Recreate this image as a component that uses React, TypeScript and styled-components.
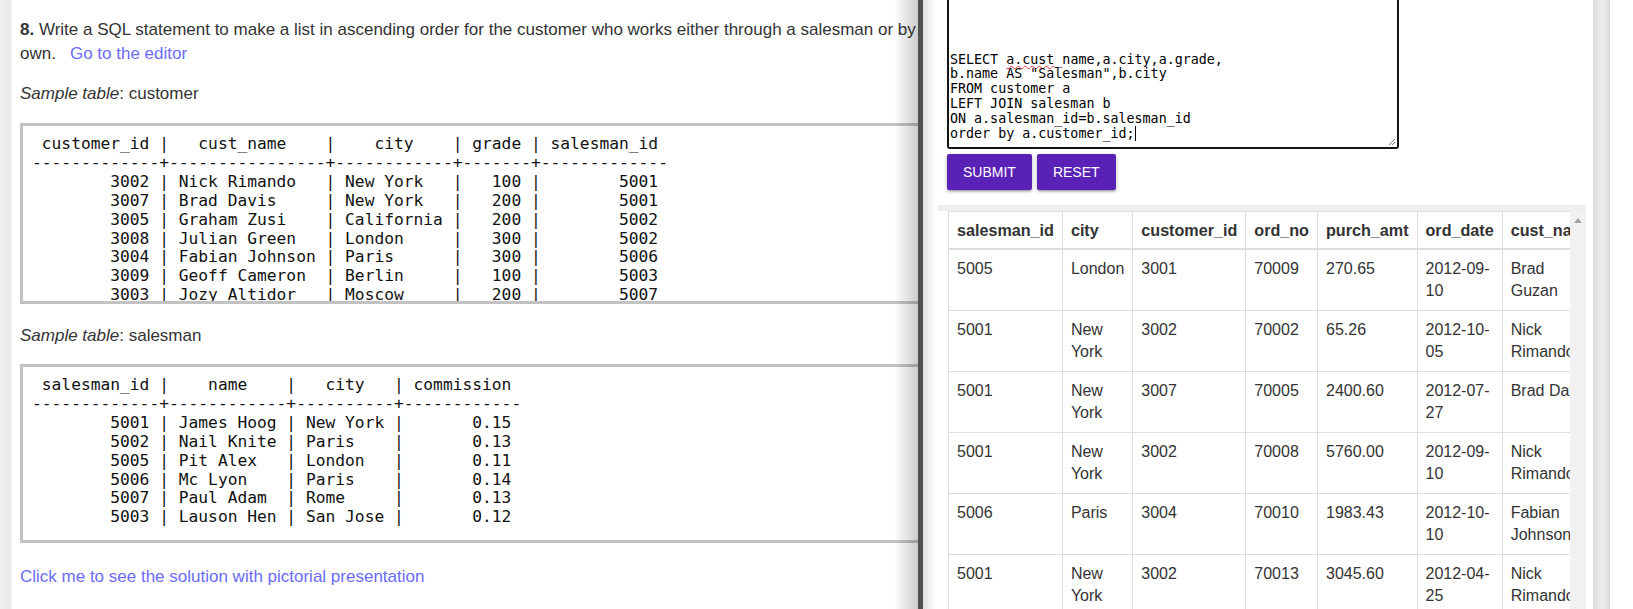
import React from 'react';
import styled, { createGlobalStyle } from 'styled-components';

const Global = createGlobalStyle`
  html, body { margin: 0; padding: 0; background: #fff; }
  body { overflow: hidden; }
`;

const Page = styled.div`
  display: flex;
  width: 1633px;
  height: 609px;
  overflow: hidden;
  background: #fff;
`;

const LeftPane = styled.div`
  position: relative;
  flex: 0 0 918px;
  min-width: 0;
  overflow: hidden;
  background: linear-gradient(to right, #f1f1f1 0, #e8e8e8 11px, #fff 12px);
  &::after {
    content: '';
    position: absolute;
    top: 0;
    right: 0;
    bottom: 0;
    width: 24px;
    background: linear-gradient(to right, rgba(0, 0, 0, 0), rgba(0, 0, 0, 0.2));
  }
`;

const Article = styled.div`
  width: 930px;
  padding: 18px 0 0 20px;
  display: flex;
  flex-direction: column;
  font-family: 'Liberation Sans', Arial, sans-serif;
  font-size: 17px;
  line-height: 24px;
  color: #333;
`;

const Para = styled.p<{ $gap: number }>`
  margin: 0 0 ${(p) => p.$gap}px 0;
`;

const Link = styled.a<{ $indent?: number }>`
  color: #6b6bf7;
  text-decoration: none;
  margin-left: ${(p) => p.$indent ?? 0}px;
`;

const SampleBox = styled.pre<{ $gap: number; $height: number }>`
  box-sizing: border-box;
  flex: none;
  height: ${(p) => p.$height}px;
  margin: 0 0 ${(p) => p.$gap}px 0;
  padding: 9px 9px 8px;
  border: 3px solid #c2c2c2;
  overflow: hidden;
  font-family: 'DejaVu Sans Mono', monospace;
  font-size: 16.25px;
  line-height: 18.9px;
  color: #111;
  white-space: pre;
`;

const Divider = styled.div`
  flex: 0 0 5px;
  background: #50504c;
`;

const EditorPanel = styled.div`
  flex: 1;
  min-width: 0;
  display: flex;
  background: #fff;
`;

const EditorScroll = styled.div`
  flex: 0 0 670px;
  min-width: 0;
  overflow: hidden;
  box-sizing: border-box;
  padding: 0 7px 0 15px;
  background: linear-gradient(to right, #e0e0e0 0, #f4f4f4 8px, #fff 13px);
  display: flex;
  flex-direction: column;
`;

const EditorBox = styled.div`
  position: relative;
  flex: none;
  box-sizing: border-box;
  width: 452px;
  height: 149px;
  margin-left: 9px;
  border: 2px solid #141414;
  border-top: none;
  border-radius: 0 0 3px 3px;
  padding: 0 2px 5px 1px;
  display: flex;
  flex-direction: column;
  justify-content: flex-end;
  font-family: 'DejaVu Sans Mono', monospace;
  font-size: 13.33px;
  line-height: 14.7px;
  color: #000;
  white-space: pre;
  background: #fff;
`;

const Misspelled = styled.span`
  text-decoration: underline wavy #e33;
  text-decoration-thickness: 1px;
  text-underline-offset: 1px;
`;

const Caret = styled.span`
  display: inline-block;
  width: 1px;
  height: 15px;
  background: #000;
  vertical-align: -3px;
`;

const Grip = styled.svg`
  position: absolute;
  right: 1px;
  bottom: 1px;
  width: 9px;
  height: 9px;
`;

const ButtonRow = styled.div`
  flex: none;
  display: flex;
  gap: 5px;
  margin: 5px 0 0 9px;
`;

const Button = styled.button`
  height: 36px;
  padding: 0 16px;
  border: none;
  border-radius: 2px;
  background: #5a21b7;
  color: #fff;
  font-family: 'Liberation Sans', Arial, sans-serif;
  font-size: 14px;
  text-transform: uppercase;
  box-shadow: 0 2px 2px 0 rgba(0, 0, 0, 0.14), 0 3px 1px -2px rgba(0, 0, 0, 0.12),
    0 1px 5px 0 rgba(0, 0, 0, 0.2);
  cursor: pointer;
`;

const TableWrap = styled.div`
  margin-top: 15px;
  flex: 1;
  min-height: 0;
  display: flex;
  border-top: 6px solid #efefef;
`;

const TableViewport = styled.div`
  flex: 1;
  min-width: 0;
  overflow: hidden;
  padding-left: 10px;
`;

const ResultTable = styled.table`
  width: 100%;
  border-collapse: collapse;
  border-spacing: 0;
  border: 1px solid #ddd;
  font-family: 'Liberation Sans', Arial, sans-serif;
  font-size: 16px;
  line-height: 22px;
  color: #333;
`;

const Th = styled.th`
  text-align: left;
  vertical-align: bottom;
  padding: 7px 8px 7px;
  border: 1px solid #ddd;
  border-bottom-width: 2px;
  font-size: 16.15px;
  font-weight: bold;
`;

const Td = styled.td`
  vertical-align: top;
  padding: 8px;
  border: 1px solid #ddd;
`;

const FakeScrollbar = styled.div`
  flex: 0 0 16px;
  background: #f1f1f1;
  display: flex;
  justify-content: center;
  padding-top: 7px;
  box-sizing: border-box;
`;

const Arrow = styled.div`
  width: 0;
  height: 0;
  border-left: 4px solid transparent;
  border-right: 4px solid transparent;
  border-bottom: 5px solid #a3a3a3;
`;

const PanelBar = styled.div`
  flex: 0 0 17px;
  background: linear-gradient(to right, #d8d8d8 0, #e6e6e6 4px, #ebebeb 9px, #e4e4e4 14px, #d6d6d6 17px);
`;

const PanelEdge = styled.div`
  flex: 1;
  background: #fff;
`;

const customerTable = ` customer_id |   cust_name    |    city    | grade | salesman_id
-------------+----------------+------------+-------+-------------
        3002 | Nick Rimando   | New York   |   100 |        5001
        3007 | Brad Davis     | New York   |   200 |        5001
        3005 | Graham Zusi    | California |   200 |        5002
        3008 | Julian Green   | London     |   300 |        5002
        3004 | Fabian Johnson | Paris      |   300 |        5006
        3009 | Geoff Cameron  | Berlin     |   100 |        5003
        3003 | Jozy Altidor   | Moscow     |   200 |        5007
        3001 | Brad Guzan     | London     |       |        5005`;

const salesmanTable = ` salesman_id |    name    |   city   | commission
-------------+------------+----------+------------
        5001 | James Hoog | New York |       0.15
        5002 | Nail Knite | Paris    |       0.13
        5005 | Pit Alex   | London   |       0.11
        5006 | Mc Lyon    | Paris    |       0.14
        5007 | Paul Adam  | Rome     |       0.13
        5003 | Lauson Hen | San Jose |       0.12`;

const headers = [
  'salesman_id',
  'city',
  'customer_id',
  'ord_no',
  'purch_amt',
  'ord_date',
  'cust_name',
  'grade',
  'name',
  'commission',
];

const rows: string[][] = [
  ['5005', 'London', '3001', '70009', '270.65', '2012-09-10', 'Brad Guzan', '', 'Pit Alex', '0.11'],
  ['5001', 'New York', '3002', '70002', '65.26', '2012-10-05', 'Nick Rimando', '100', 'James Hoog', '0.15'],
  ['5001', 'New York', '3007', '70005', '2400.60', '2012-07-27', 'Brad Davis', '200', 'James Hoog', '0.15'],
  ['5001', 'New York', '3002', '70008', '5760.00', '2012-09-10', 'Nick Rimando', '100', 'James Hoog', '0.15'],
  ['5006', 'Paris', '3004', '70010', '1983.43', '2012-10-10', 'Fabian Johnson', '300', 'Mc Lyon', '0.14'],
  ['5001', 'New York', '3002', '70013', '3045.60', '2012-04-25', 'Nick Rimando', '100', 'James Hoog', '0.15'],
  ['5003', 'Berlin', '3009', '70011', '75.29', '2012-08-17', 'Geoff Cameron', '100', 'Lauson Hen', '0.12'],
];

export default function App() {
  return (
    <>
      <Global />
      <Page>
        <LeftPane>
          <Article>
            <Para $gap={16}>
              <strong>8.</strong> Write a SQL statement to make a list in ascending order for the customer who
              works either through a salesman or by own.
              <Link href="#" $indent={14}>
                Go to the editor
              </Link>
            </Para>
            <Para $gap={17}>
              <em>Sample table</em>: customer
            </Para>
            <SampleBox $gap={20} $height={181}>
              {customerTable}
            </SampleBox>
            <Para $gap={16}>
              <em>Sample table</em>: salesman
            </Para>
            <SampleBox $gap={22} $height={179}>
              {salesmanTable}
            </SampleBox>
            <Para $gap={0}>
              <Link href="#">Click me to see the solution with pictorial presentation</Link>
            </Para>
          </Article>
        </LeftPane>
        <Divider />
        <EditorPanel>
          <EditorScroll>
            <EditorBox>
              <div>
                SELECT <Misspelled>a.cust</Misspelled>_name,a.city,a.grade,
              </div>
              <div>b.name AS "Salesman",b.city</div>
              <div>FROM customer a</div>
              <div>LEFT JOIN salesman b</div>
              <div>ON a.salesman_id=b.salesman_id</div>
              <div>
                order by a.customer_id;
                <Caret />
              </div>
              <Grip viewBox="0 0 9 9">
                <path d="M8 2 L2 8 M8 5 L5 8" stroke="#777" strokeWidth="1" fill="none" />
              </Grip>
            </EditorBox>
            <ButtonRow>
              <Button>Submit</Button>
              <Button>Reset</Button>
            </ButtonRow>
            <TableWrap>
              <TableViewport>
                <ResultTable>
                  <thead>
                    <tr>
                      {headers.map((h, i) => (
                        <Th key={i}>{h}</Th>
                      ))}
                    </tr>
                  </thead>
                  <tbody>
                    {rows.map((r, i) => (
                      <tr key={i}>
                        {r.map((c, j) => (
                          <Td key={j}>{c}</Td>
                        ))}
                      </tr>
                    ))}
                  </tbody>
                </ResultTable>
              </TableViewport>
              <FakeScrollbar>
                <Arrow />
              </FakeScrollbar>
            </TableWrap>
          </EditorScroll>
          <PanelBar />
          <PanelEdge />
        </EditorPanel>
      </Page>
    </>
  );
}
